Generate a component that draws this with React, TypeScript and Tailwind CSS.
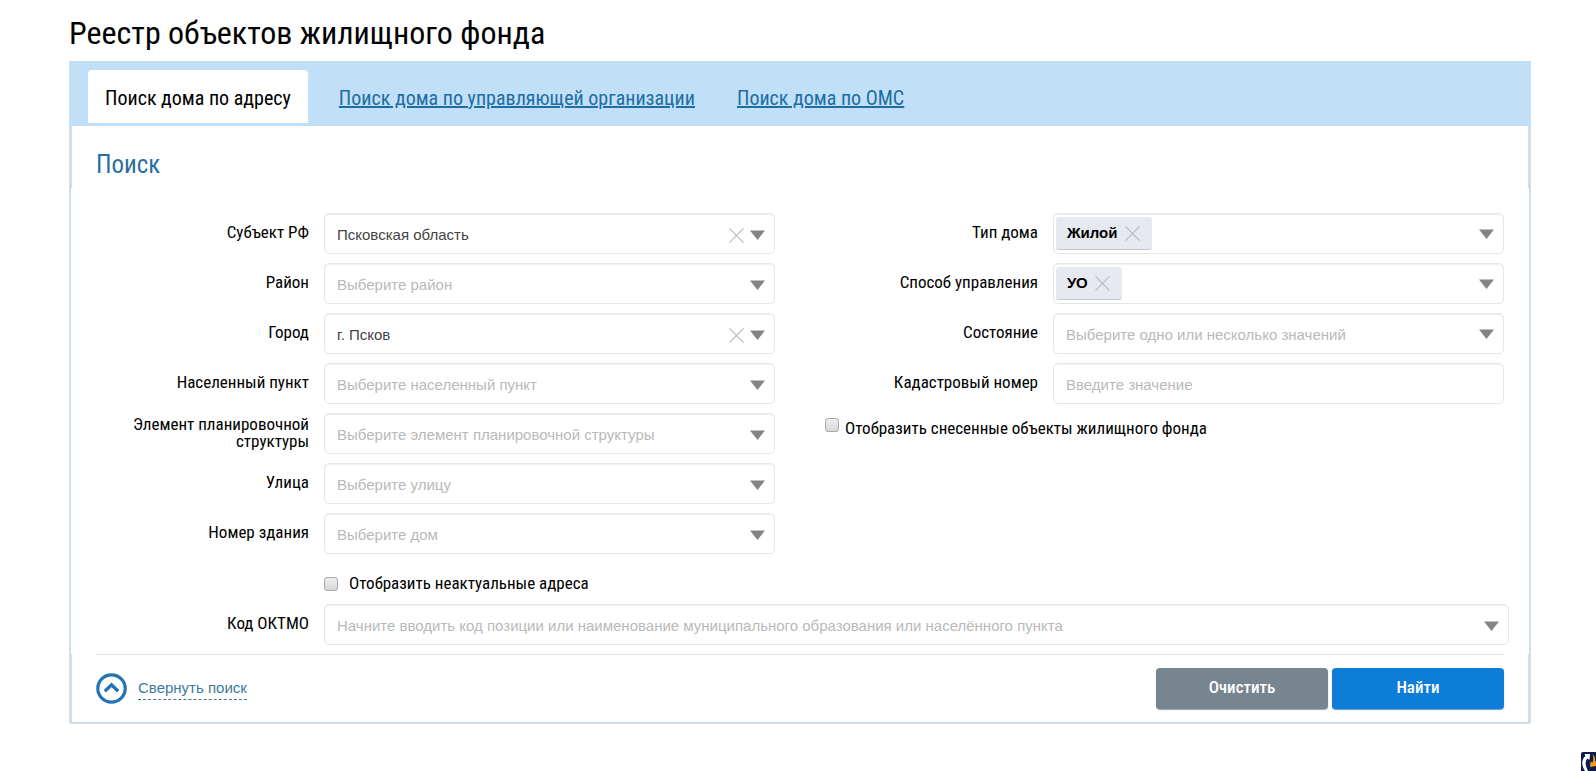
import { useState } from 'react'
import type { ReactNode } from 'react'

const TABS = ['Поиск дома по адресу', 'Поиск дома по управляющей организации', 'Поиск дома по ОМС']

const ADDRESS_FIELDS = [
  { id: 'region', label: 'Субъект РФ', placeholder: 'Выберите субъект РФ', value: 'Псковская область' },
  { id: 'district', label: 'Район', placeholder: 'Выберите район' },
  { id: 'city', label: 'Город', placeholder: 'Выберите город', value: 'г. Псков' },
  { id: 'settlement', label: 'Населенный пункт', placeholder: 'Выберите населенный пункт' },
  { id: 'planning', label: 'Элемент планировочной структуры', placeholder: 'Выберите элемент планировочной структуры' },
  { id: 'street', label: 'Улица', placeholder: 'Выберите улицу' },
  { id: 'house', label: 'Номер здания', placeholder: 'Выберите дом' },
]

const condensed = "font-['Roboto_Condensed','Roboto',sans-serif]"
const box = 'h-[41px] w-full rounded-[5px] border border-[#e4e6e7] bg-white shadow-[inset_0_1px_1px_#eff0f1]'

function Arrow() {
  return (
    <svg className="h-[10px] w-[15px] shrink-0" viewBox="0 0 15 10" aria-hidden="true">
      <path d="M0 0.5H15L7.5 10Z" fill="#848484" />
    </svg>
  )
}

function Cross() {
  return (
    <svg className="size-[15px]" viewBox="0 0 16 16" aria-hidden="true">
      <path d="M0.5 0.5L15.5 15.5M15.5 0.5L0.5 15.5" stroke="#b5b8bc" strokeWidth="1.2" fill="none" />
    </svg>
  )
}

function Row({ id, label, children }: { id: string; label: string; children: ReactNode }) {
  return (
    <div className="grid grid-cols-[228px_minmax(0,1fr)] items-center">
      <label htmlFor={id} className={`${condensed} pr-[15px] pb-[2px] pl-6 text-right text-[17px] leading-[17px]`}>
        {label}
      </label>
      {children}
    </div>
  )
}

function SelectBox({ id, placeholder, initial = '' }: { id: string; placeholder: string; initial?: string }) {
  const [value, setValue] = useState(initial)

  return (
    <div className="relative">
      <select
        id={id}
        value={value}
        onChange={(e) => setValue(e.target.value)}
        className={`${box} appearance-none pt-[3px] pr-14 pl-3 text-[15px] ${value ? 'text-[#444]' : 'text-[#b9b9b9]'}`}
      >
        <option value="">{placeholder}</option>
        {initial && <option value={initial}>{initial}</option>}
      </select>
      <div className="pointer-events-none absolute inset-y-0 right-[10px] flex items-center gap-[6px] pt-[3px]">
        {value && (
          <button type="button" aria-label="Очистить поле" className="pointer-events-auto" onClick={() => setValue('')}>
            <Cross />
          </button>
        )}
        <Arrow />
      </div>
    </div>
  )
}

function TagBox({ id, initial = [], placeholder }: { id: string; initial?: string[]; placeholder?: string }) {
  const [tags, setTags] = useState(initial)

  return (
    <div className={`${box} flex items-center pr-[9px] pl-[2px]`}>
      {tags.map((tag) => (
        <span
          key={tag}
          className="flex h-[33px] shrink-0 items-center gap-[7px] rounded-[3px] border-b border-[#c3c7ce] bg-[#e6e9f0] pr-3 pl-[11px] text-[15px] font-bold"
        >
          {tag}
          <button type="button" aria-label={`Удалить ${tag}`} onClick={() => setTags(tags.filter((t) => t !== tag))}>
            <Cross />
          </button>
        </span>
      ))}
      <input
        id={id}
        type="text"
        placeholder={tags.length ? undefined : placeholder}
        className="h-full min-w-0 flex-1 bg-transparent pt-[2px] pl-[10px] text-[15px] outline-none placeholder:text-[#b9b9b9]"
      />
      <Arrow />
    </div>
  )
}

function Checkbox({ id }: { id: string }) {
  return (
    <input
      id={id}
      type="checkbox"
      className="size-[14px] shrink-0 appearance-none rounded-[3px] border border-[#a9a9a9] bg-linear-to-b from-[#eeeeee] to-[#d8d8d8] checked:from-[#0d7dd8] checked:to-[#0d7dd8]"
    />
  )
}

export default function App() {
  return (
    <div className="min-h-screen bg-white pr-[65px] pb-[47px] pl-[69px] font-['Liberation_Sans',Arial,sans-serif] text-black">
      <h1 className={`${condensed} pt-[11px] pb-[6px] text-[32px] leading-[44px]`}>Реестр объектов жилищного фонда</h1>

      <nav className="flex h-[65px] items-end bg-[#c1dff7] pb-[3px] pl-[19px]">
        {TABS.map((tab, index) =>
          index === 0 ? (
            <a
              key={tab}
              href="#address"
              aria-current="page"
              className={`${condensed} mr-[10px] rounded-t-[4px] bg-white px-[17px] pt-1 text-[20px] leading-[49px]`}
            >
              {tab}
            </a>
          ) : (
            <a
              key={tab}
              href="#search"
              className={`${condensed} px-[21px] pt-1 text-[20px] leading-[49px] text-[#1c6ea4] underline`}
            >
              {tab}
            </a>
          ),
        )}
      </nav>

      <form onSubmit={(e) => e.preventDefault()}>
        <div className="border-x-[3px] border-[#ccdfea] px-6 pt-[23px] pb-[7px]">
          <h2 className={`${condensed} text-[25px] leading-8 text-[#2a6f9a]`}>Поиск</h2>
        </div>

        <div className="border-x-2 border-[#ccdfea] px-[25px] pt-[25px] pb-[9px]">
          <div className="grid grid-cols-2 gap-x-[50px]">
            <div className="flex flex-col gap-[9px]">
              {ADDRESS_FIELDS.map((field) => (
                <Row key={field.id} id={field.id} label={field.label}>
                  <SelectBox id={field.id} placeholder={field.placeholder} initial={field.value} />
                </Row>
              ))}
              <div className="flex h-[41px] items-center gap-[11px] pl-[228px]">
                <Checkbox id="inactual" />
                <label htmlFor="inactual" className={`${condensed} text-[17px] leading-[17px]`}>
                  Отобразить неактуальные адреса
                </label>
              </div>
            </div>

            <div className="flex flex-col gap-[9px]">
              <Row id="house-type" label="Тип дома">
                <TagBox id="house-type" initial={['Жилой']} />
              </Row>
              <Row id="management" label="Способ управления">
                <TagBox id="management" initial={['УО']} />
              </Row>
              <Row id="state" label="Состояние">
                <TagBox id="state" placeholder="Выберите одно или несколько значений" />
              </Row>
              <Row id="cadastral" label="Кадастровый номер">
                <input
                  id="cadastral"
                  type="text"
                  placeholder="Введите значение"
                  className={`${box} px-3 pt-[2px] text-[15px] placeholder:text-[#b9b9b9]`}
                />
              </Row>
              <div className="flex items-start gap-[6px] pt-[5px]">
                <Checkbox id="demolished" />
                <label htmlFor="demolished" className={`${condensed} pt-[2px] text-[17px] leading-[17px]`}>
                  Отобразить снесенные объекты жилищного фонда
                </label>
              </div>
            </div>
          </div>

          <div className="mr-[-5px]">
            <Row id="oktmo" label="Код ОКТМО">
              <SelectBox
                id="oktmo"
                placeholder="Начните вводить код позиции или наименование муниципального образования или населённого пункта"
              />
            </Row>
          </div>
        </div>

        <div className="rounded-b-[3px] border-x-[3px] border-b-2 border-[#ccdfea] px-6 pb-[13px]">
          <div className="flex items-center justify-between border-t border-[#dfe2e4] pt-[13px]">
            <button type="button" className="flex items-center gap-[11px]">
              <svg className="size-[31px]" viewBox="0 0 31 31" fill="none" stroke="#2474b5" aria-hidden="true">
                <circle cx="15.5" cy="15.5" r="13.7" strokeWidth="3.2" />
                <path d="M8.8 18.2L15.5 11.8L22.2 18.2" strokeWidth="3.4" />
              </svg>
              <span className="border-b border-dashed border-[#3c7a9c] text-[15px] leading-[22px] text-[#3c7a9c]">
                Свернуть поиск
              </span>
            </button>
            <div className={`${condensed} flex gap-1 text-[17px] font-medium text-white`}>
              <button type="reset" className="h-[41px] w-[172px] rounded-[4px] bg-[#778590] pb-[2px] shadow-[0_1px_1px_#9aa5ad]">
                Очистить
              </button>
              <button type="submit" className="h-[41px] w-[172px] rounded-[4px] bg-[#0d7dd8] pb-[2px] shadow-[0_1px_1px_#5f9bc9]">
                Найти
              </button>
            </div>
          </div>
        </div>
      </form>

      <svg className="fixed right-0 bottom-0 h-[19px] w-[15px]" viewBox="0 0 15 19" aria-hidden="true">
        <path d="M2 0H15V19H0V2Q0 0 2 0Z" fill="#0c1b4b" />
        <path d="M4 19C0 13 0.5 7 4.5 4L3.5 2L9 2L8.5 8L6.5 6.5C4 9 4 13 7 19Z" fill="#fff" />
        <path d="M11.5 2C14 4 14.5 7 14 9.5L15 9V14L9 15L9.5 9.5L11.5 10.5C12.5 8 12.5 5 11.5 2Z" fill="#f09a22" />
      </svg>
    </div>
  )
}
